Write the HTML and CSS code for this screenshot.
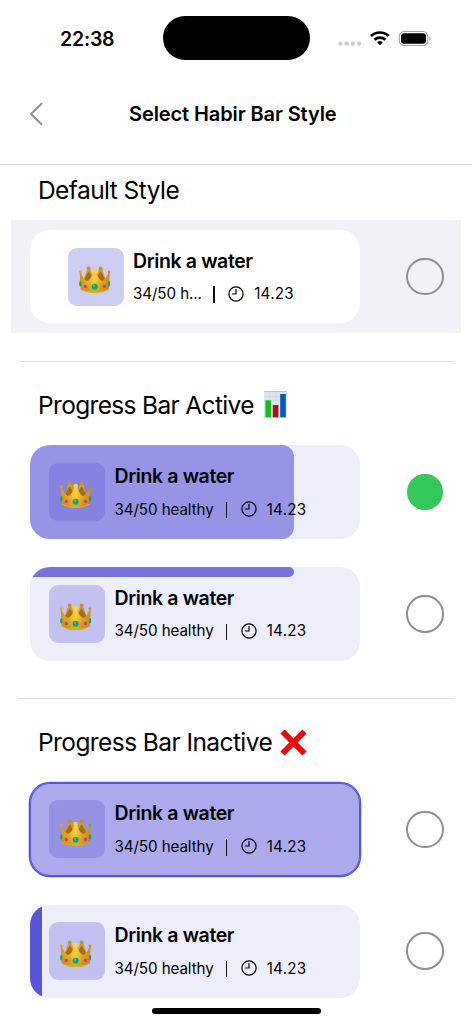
FILE: index.html
```
<!DOCTYPE html>
<html lang="en">
<head>
<meta charset="utf-8">
<title>Select Habir Bar Style</title>
<link rel="stylesheet" href="styles.css">
</head>
<body>
<svg class="defs" aria-hidden="true">
  <defs>
    <linearGradient id="gold" x1="0" y1="0" x2="1" y2="0">
      <stop offset="0" stop-color="#d09a14"/><stop offset=".25" stop-color="#e0ad22"/>
      <stop offset=".5" stop-color="#f5d23c"/><stop offset=".75" stop-color="#dca520"/>
      <stop offset="1" stop-color="#c68e16"/>
    </linearGradient>
    <linearGradient id="shade" x1="0" y1="0" x2="0" y2="1">
      <stop offset=".45" stop-color="#a66a08" stop-opacity="0"/>
      <stop offset="1" stop-color="#a66a08" stop-opacity=".4"/>
    </linearGradient>
  </defs>
  <symbol id="crown" viewBox="0 0 94 82">
    <path d="M25 9 H33 L43 32 L34 48 L22 46 L14 40Z M69 9 H61 L51 32 L60 48 L72 46 L80 40Z" fill="#cf9c22"/>
    <path d="M29 16 L42 34 L34 46 L22 46 L16 39Z M65 16 L52 34 L60 46 L72 46 L78 39Z" fill="#a66c16"/>
    <path d="M2 20 H6 Q12 37 23 45 Q36 42 43 17 H51 Q58 42 71 45 Q82 37 88 20 H92 L89 70 Q70 81 47 81 Q24 81 5 70Z" fill="url(#gold)"/>
    <path d="M2 20 H6 Q12 37 23 45 Q36 42 43 17 H51 Q58 42 71 45 Q82 37 88 20 H92 L89 70 Q70 81 47 81 Q24 81 5 70Z" fill="url(#shade)"/>
    <path d="M5 69 Q24 79 47 79 Q70 79 89 69" fill="none" stroke="#e6b93b" stroke-width="2"/>
    <circle cx="29" cy="7" r="6" fill="#c7941f"/><circle cx="65" cy="7" r="6" fill="#c7941f"/>
    <circle cx="47" cy="15" r="7" fill="#f9d63c"/>
    <circle cx="4" cy="17" r="4" fill="#d9a51f"/><circle cx="90" cy="17" r="4" fill="#c08c18"/>
    <ellipse cx="4" cy="53" rx="3.5" ry="8" fill="#179b78"/><ellipse cx="90" cy="53" rx="3.5" ry="8" fill="#179b78"/>
    <circle cx="19" cy="61" r="5" fill="#d72fa0"/><circle cx="76" cy="61" r="5" fill="#d72fa0"/>
    <circle cx="47" cy="62" r="9" fill="#14a079"/><circle cx="45" cy="59" r="3.5" fill="#38b994"/>
  </symbol>
  <symbol id="clock" viewBox="0 0 16 16">
    <g fill="none" stroke="currentColor" stroke-width="1.2" stroke-linecap="round">
      <circle cx="8" cy="8" r="7.1"/><path d="M8 3.3V8H4.4"/>
    </g>
  </symbol>
</svg>

<div class="screen">
  <div class="status">
    <span class="time">22:38</span>
    <span class="island"></span>
    <svg class="indicators" viewBox="0 0 94 18" aria-hidden="true">
      <g fill="#cbcbcb"><circle cx="2.4" cy="14.7" r="2.1"/><circle cx="8.6" cy="14.7" r="2.1"/><circle cx="14.9" cy="14.7" r="2.1"/><circle cx="21.2" cy="14.7" r="2.1"/></g>
      <g fill="none" stroke="#000" stroke-width="2.7">
        <path d="M33 7a13 13 0 0 1 17.8 0"/>
        <path d="M36.5 10.8a8 8 0 0 1 10.8 0"/>
      </g>
      <path d="M41.9 16.2l-2.9-2.9a4.2 4.2 0 0 1 5.8 0z"/>
      <rect x="61.3" y="2.5" width="28.4" height="14" rx="4.7" fill="none" stroke="#a2a2a2" stroke-width="1.1"/>
      <rect x="63" y="4.2" width="25" height="10.6" rx="3.2"/>
      <path d="M91.3 7.2q3 2.2 0 4.6z" fill="#a2a2a2"/>
    </svg>
  </div>
  <header class="nav">
    <svg class="back" viewBox="0 0 14 24" aria-hidden="true"><path d="M12.5 1.8L2 12l10.5 10.2" fill="none" stroke="#8e8e93" stroke-width="2" stroke-linecap="round" stroke-linejoin="round"/></svg>
    <h1 class="nav-title">Select Habir Bar Style</h1>
  </header>

  <main>
    <section class="group first">
      <h2 class="heading">Default Style</h2>
      <div class="row shaded">
        <div class="card plain">
          <div class="tile"><svg class="crown"><use href="#crown"/></svg></div>
          <div class="info"><div class="name">Drink a water</div>
            <div class="meta"><span class="count short">34/50 h...</span><i class="bar"></i><svg class="clock"><use href="#clock"/></svg><span class="hour">14.23</span></div></div>
        </div>
        <span class="radio"></span>
      </div>
    </section>

    <section class="group">
      <h2 class="heading active">Progress Bar Active
        <svg class="chart" viewBox="0 0 23 27" aria-hidden="true"><rect width="23" height="27" fill="#dbe5ee"/><path d="M0 5.5h23M0 10h23M0 15h23M0 20h23M5.5 0v27M12 0v27" stroke="#cbd8e3" stroke-width=".5"/><path d="M0 .5h23" stroke="#bcc8d0"/><rect x="1.4" y="9.3" width="5.6" height="17" fill="#10bd22"/><rect x="8.8" y="14" width="5.6" height="12.3" fill="#bd0a12"/><rect x="16.2" y="3" width="5.6" height="23.3" fill="#0759bd"/></svg>
      </h2>
      <div class="row">
        <div class="card fill-progress">
          <div class="tile"><svg class="crown"><use href="#crown"/></svg></div>
          <div class="info"><div class="name">Drink a water</div>
            <div class="meta"><span class="count">34/50 healthy</span><i class="bar"></i><svg class="clock"><use href="#clock"/></svg><span class="hour">14.23</span></div></div>
        </div>
        <span class="radio selected"></span>
      </div>
      <div class="row">
        <div class="card top-progress">
          <div class="tile"><svg class="crown"><use href="#crown"/></svg></div>
          <div class="info"><div class="name">Drink a water</div>
            <div class="meta"><span class="count">34/50 healthy</span><i class="bar"></i><svg class="clock"><use href="#clock"/></svg><span class="hour">14.23</span></div></div>
        </div>
        <span class="radio"></span>
      </div>
    </section>

    <section class="group">
      <h2 class="heading inactive">Progress Bar Inactive
        <svg class="cross" viewBox="0 0 27 27" aria-hidden="true"><path d="M2.5 2.5l22 22M24.5 2.5l-22 22" stroke="#f20808" stroke-width="6"/></svg>
      </h2>
      <div class="row">
        <div class="card outlined">
          <div class="tile"><svg class="crown"><use href="#crown"/></svg></div>
          <div class="info"><div class="name">Drink a water</div>
            <div class="meta"><span class="count">34/50 healthy</span><i class="bar"></i><svg class="clock"><use href="#clock"/></svg><span class="hour">14.23</span></div></div>
        </div>
        <span class="radio"></span>
      </div>
      <div class="row">
        <div class="card side-accent">
          <div class="tile"><svg class="crown"><use href="#crown"/></svg></div>
          <div class="info"><div class="name">Drink a water</div>
            <div class="meta"><span class="count">34/50 healthy</span><i class="bar"></i><svg class="clock"><use href="#clock"/></svg><span class="hour">14.23</span></div></div>
        </div>
        <span class="radio"></span>
      </div>
    </section>
  </main>
  <div class="home"></div>
</div>
</body>
</html>
```
FILE: styles.css
```
* { box-sizing: border-box; }
body { margin: 0; background: #fff; color: #000; font-family: Inter, "Liberation Sans", sans-serif; }
.defs { position: absolute; width: 0; height: 0; }
.screen { position: relative; width: 472px; height: 1024px; overflow: hidden; }

.status { display: flex; align-items: flex-start; height: 76px; padding: 16px 0 0 60px; }
.time { width: 102.5px; padding-top: 11px; font-size: 19.5px; line-height: 24px; font-weight: 600; letter-spacing: -0.2px; }
.island { width: 147.5px; height: 43.5px; border-radius: 22px; background: #000; }
.indicators { width: 94px; height: 18px; margin: 13px 0 0 28px; }

.nav { display: flex; align-items: center; height: 89px; padding: 0 0 13px 29px; border-bottom: 1px solid #dedede; }
.back { width: 14px; height: 24px; }
.nav-title { margin: 0 0 0 86px; font-size: 20px; line-height: 24px; font-weight: 600; letter-spacing: -0.1px; white-space: nowrap; }

.group { padding: 0 11px 18.5px; }
.group.first { padding-top: 7.4px; padding-bottom: 0; }
.group.first .row { margin-bottom: 28px; }
.group + .group::before { content: ""; display: block; height: 1px; margin: 0 7px 0 8px; background: #e3e3e5; }
.heading { display: flex; align-items: center; gap: 10px; height: 36px; margin: 0 0 12px 27px; font-size: 24.5px; font-weight: 400; letter-spacing: -0.56px; white-space: nowrap; }
.heading.active { letter-spacing: -0.66px; }
.group + .group .heading { margin-top: 25.2px; margin-bottom: 13px; }
.chart { width: 23px; height: 27px; }
.heading.inactive { gap: 8px; letter-spacing: -0.58px; }
.cross { width: 27px; height: 27px; }

.row { display: flex; align-items: center; justify-content: space-between; height: 112.4px; margin-bottom: 9.4px; padding: 0 17.5px 0 19px; }
.shaded { background: #f2f1f7; }
.card { position: relative; display: flex; align-items: center; gap: 9.5px; width: 330px; height: 93.4px; padding-left: 19px; border-radius: 20px; background: #eeedfa; overflow: hidden; }
.card::before { position: absolute; left: 0; top: 0; }
.plain { padding-left: 37.5px; background: #fff; }
.fill-progress::before { content: ""; width: 264px; height: 100%; border-radius: 12px; background: #9694e6; }
.top-progress::before { content: ""; width: 264px; height: 9.3px; border-radius: 0 5px 5px 0; background: #7673df; }
.outlined { background: #adaaeb; overflow: visible; box-shadow: inset 0 0 0 1px #5957d7, 0 0 0 1.3px #5957d7; }
.side-accent::before { content: ""; width: 11.5px; height: 100%; background: #5856d6; }

.tile { position: relative; width: 56px; height: 58px; padding: 18.3px 0 0 11.3px; border-radius: 9px; background: #c3c1f1; }
.plain .tile { background: #cdccf3; }
.fill-progress .tile { background: #8582e1; }
.outlined .tile { background: #9592e5; }
.crown { display: block; width: 31.4px; height: 27.5px; }

.info { position: relative; }
.name { font-size: 19.5px; line-height: 24px; font-weight: 600; letter-spacing: -0.38px; white-space: nowrap; }
.meta { display: flex; align-items: center; height: 22px; margin-top: 10px; font-size: 15.2px; }
.count { width: 111px; letter-spacing: -0.1px; white-space: nowrap; }
.count.short { width: 80px; }
.bar { width: 1.8px; height: 16.5px; margin-top: 2px; background: #111; }
.clock { width: 16px; height: 16px; margin: 0 10px 0 13.4px; }
.hour { letter-spacing: 0.25px; white-space: nowrap; }

.radio { width: 37.5px; height: 37.5px; border: 2.4px solid #8e8e93; border-radius: 50%; }
.selected { width: 35.5px; height: 35.5px; margin-right: 1px; border: 0; background: #34c759; }
.home { position: absolute; left: 152px; top: 1008px; width: 169px; height: 6px; border-radius: 3px; background: #000; }
```
